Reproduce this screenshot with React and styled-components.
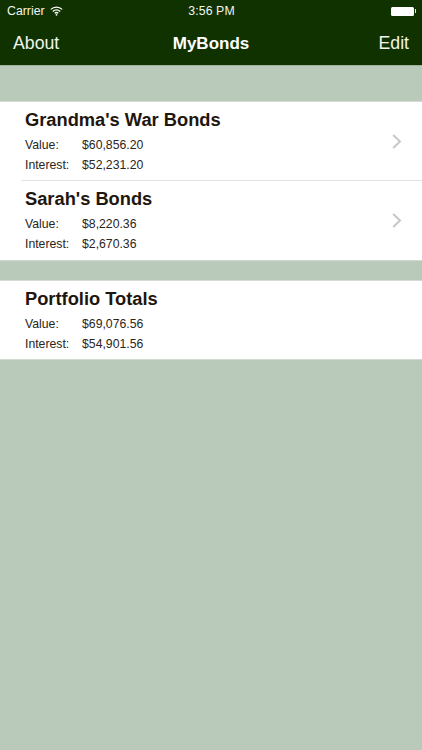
import React from "react";
import styled, { createGlobalStyle } from "styled-components";

const Global = createGlobalStyle`
  html, body { margin: 0; padding: 0; background: #bacaba; }
  body { font-family: "Liberation Sans", Arial, sans-serif; }
`;

const Screen = styled.div`
  width: 422px;
  height: 750px;
  overflow: hidden;
  background: #bacaba;
  display: flex;
  flex-direction: column;
`;

const Header = styled.header`
  height: 65px;
  background: #103200;
  border-bottom: 1px solid #9fb09c;
  box-sizing: content-box;
  color: #fff;
  display: flex;
  flex-direction: column;
`;

const StatusBar = styled.div`
  height: 22px;
  display: grid;
  grid-template-columns: 1fr auto 1fr;
  align-items: center;
  padding: 0 6px 0 7px;
  font-size: 12.3px;
  color: #f2f5ef;
`;

const Carrier = styled.div`
  display: flex;
  align-items: center;
  gap: 5px;
`;

const Clock = styled.div`
  font-weight: 400;
  letter-spacing: 0.1px;
`;

const Battery = styled.div`
  justify-self: end;
  display: flex;
  align-items: center;
`;

const BatteryBody = styled.div`
  width: 23px;
  height: 9px;
  background: #fff;
  border-radius: 1.5px;
`;

const BatteryTip = styled.div`
  width: 1.5px;
  height: 4px;
  margin-left: 1px;
  background: #dfe5da;
`;

const NavBar = styled.nav`
  height: 43px;
  display: flex;
  align-items: center;
  justify-content: space-between;
  padding: 0 13px;
  position: relative;
  font-size: 17.7px;
`;

const NavTitle = styled.div`
  position: absolute;
  left: 0;
  right: 0;
  text-align: center;
  font-weight: 700;
  font-size: 17px;
  pointer-events: none;
`;

const NavButton = styled.span`
  color: #f1f5ec;
`;

const Section = styled.section`
  margin-top: ${(p) => p.$gap}px;
  background: #fff;
  border-top: 1px solid #d4dcd3;
  border-bottom: 1px solid #d0dacf;
`;

const Row = styled.div`
  position: relative;
  height: ${(p) => p.$height}px;
  padding: 7px 0 0 25px;
  box-sizing: border-box;
  color: #1f160e;
  & + &::before {
    content: "";
    position: absolute;
    top: -1px;
    left: 21px;
    right: 0;
    height: 1px;
    background: #e2e2e0;
  }
`;

const RowTitle = styled.div`
  font-size: 18.3px;
  font-weight: 700;
  line-height: 22px;
  margin-bottom: 4px;
`;

const Metric = styled.div`
  display: flex;
  font-size: 12.25px;
  line-height: 20px;
  color: #2a2520;
`;

const MetricLabel = styled.span`
  width: 57px;
`;

const Chevron = styled.svg`
  position: absolute;
  right: 20px;
  top: 32px;
`;

const Wifi = () => (
  <svg width="13" height="10" viewBox="0 0 13 10" fill="none" stroke="#fff" strokeWidth="1.3">
    <path d="M0.8 3.4C4 0.3 9 0.3 12.2 3.4" />
    <path d="M2.8 5.4C4.9 3.5 8.1 3.5 10.2 5.4" />
    <path d="M4.7 7.2C5.7 6.4 7.3 6.4 8.3 7.2" />
    <circle cx="6.5" cy="8.8" r="0.9" fill="#fff" stroke="none" />
  </svg>
);

const portfolios = [
  { name: "Grandma's War Bonds", value: "$60,856.20", interest: "$52,231.20", link: true },
  { name: "Sarah's Bonds", value: "$8,220.36", interest: "$2,670.36", link: true },
];

const BondRow = ({ name, value, interest, link, height = 79 }) => (
  <Row $height={height}>
    <RowTitle>{name}</RowTitle>
    <Metric><MetricLabel>Value:</MetricLabel><span>{value}</span></Metric>
    <Metric><MetricLabel>Interest:</MetricLabel><span>{interest}</span></Metric>
    {link && (
      <Chevron width="10" height="15" viewBox="0 0 10 15" fill="none" stroke="#c7c7cc" strokeWidth="2">
        <path d="M1.2 1L8 7.5L1.2 14" />
      </Chevron>
    )}
  </Row>
);

export default function App() {
  return (
    <Screen>
      <Global />
      <Header>
        <StatusBar>
          <Carrier>Carrier <Wifi /></Carrier>
          <Clock>3:56 PM</Clock>
          <Battery><BatteryBody /><BatteryTip /></Battery>
        </StatusBar>
        <NavBar>
          <NavButton>About</NavButton>
          <NavTitle>MyBonds</NavTitle>
          <NavButton>Edit</NavButton>
        </NavBar>
      </Header>
      <Section $gap={35}>
        {portfolios.map((p) => <BondRow key={p.name} {...p} />)}
      </Section>
      <Section $gap={19}>
        <BondRow name="Portfolio Totals" value="$69,076.56" interest="$54,901.56" height={78} />
      </Section>
    </Screen>
  );
}
